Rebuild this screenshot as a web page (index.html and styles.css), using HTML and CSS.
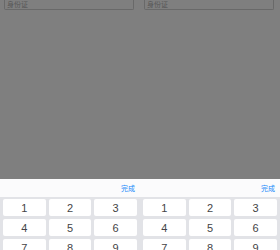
FILE: index.html
```html
<!DOCTYPE html>
<html>
<head>
<meta charset="utf-8">
<link rel="stylesheet" href="styles.css">
</head>
<body>
<div class="demo">
  <div class="pane">
    <div class="field"><span class="ph">身份证</span></div>
    <div class="mask"></div>
    <div class="keyboard">
      <div class="kb-head"><span class="done">完成</span></div>
      <div class="keys">
        <div class="key">1</div><div class="key">2</div><div class="key">3</div>
        <div class="key">4</div><div class="key">5</div><div class="key">6</div>
        <div class="key">7</div><div class="key">8</div><div class="key">9</div>
        <div class="key">X</div><div class="key">0</div><div class="key">⌫</div>
      </div>
    </div>
  </div>
  <div class="pane">
    <div class="field"><span class="ph">身份证</span></div>
    <div class="mask"></div>
    <div class="keyboard">
      <div class="kb-head"><span class="done">完成</span></div>
      <div class="keys">
        <div class="key">1</div><div class="key">2</div><div class="key">3</div>
        <div class="key">4</div><div class="key">5</div><div class="key">6</div>
        <div class="key">7</div><div class="key">8</div><div class="key">9</div>
        <div class="key">X</div><div class="key">0</div><div class="key">⌫</div>
      </div>
    </div>
  </div>
</div>
</body>
</html>
```
FILE: styles.css
```css
html, body {
  margin: 0;
  padding: 0;
  background: #ffffff;
  font-family: "Noto Sans", "Noto Sans CJK SC", sans-serif;
}
.demo {
  width: 280px;
  height: 250px;
  overflow: hidden;
  display: grid;
  grid-template-columns: 140px 140px;
}
.pane {
  position: relative;
  height: 250px;
  display: flex;
  flex-direction: column;
  overflow: hidden;
}
.field {
  margin: 0 6px 0 4px;
  height: 10px;
  border: 1px solid #d2d2d2;
  border-top: none;
  border-radius: 0 0 2px 2px;
  background: #fff;
  display: flex;
  align-items: center;
  padding-left: 2px;
  box-sizing: border-box;
}
.ph {
  font-size: 7px;
  line-height: 8px;
  color: #b0b0b0;
}
.mask {
  position: absolute;
  inset: 0;
  background: rgba(0, 0, 0, 0.5);
}
.keyboard {
  position: relative;
  margin-top: auto;
  height: 71px;
  display: flex;
  flex-direction: column;
  z-index: 1;
}
.kb-head {
  height: 18px;
  flex: none;
  background: #fbfbfc;
  display: flex;
  align-items: center;
  justify-content: flex-end;
  padding-right: 5px;
  box-sizing: border-box;
}
.done {
  font-size: 7px;
  color: #1989fa;
}
.keys {
  flex: 1;
  background: #e2e3e7;
  padding: 2px 3px 0 3px;
  display: grid;
  grid-template-columns: repeat(3, 1fr);
  grid-auto-rows: 17px;
  gap: 3px;
}
.key {
  background: #fff;
  border-radius: 2px;
  display: flex;
  align-items: center;
  justify-content: center;
  font-family: "Liberation Sans", sans-serif;
  font-size: 11px;
  color: #444446;
}
```
